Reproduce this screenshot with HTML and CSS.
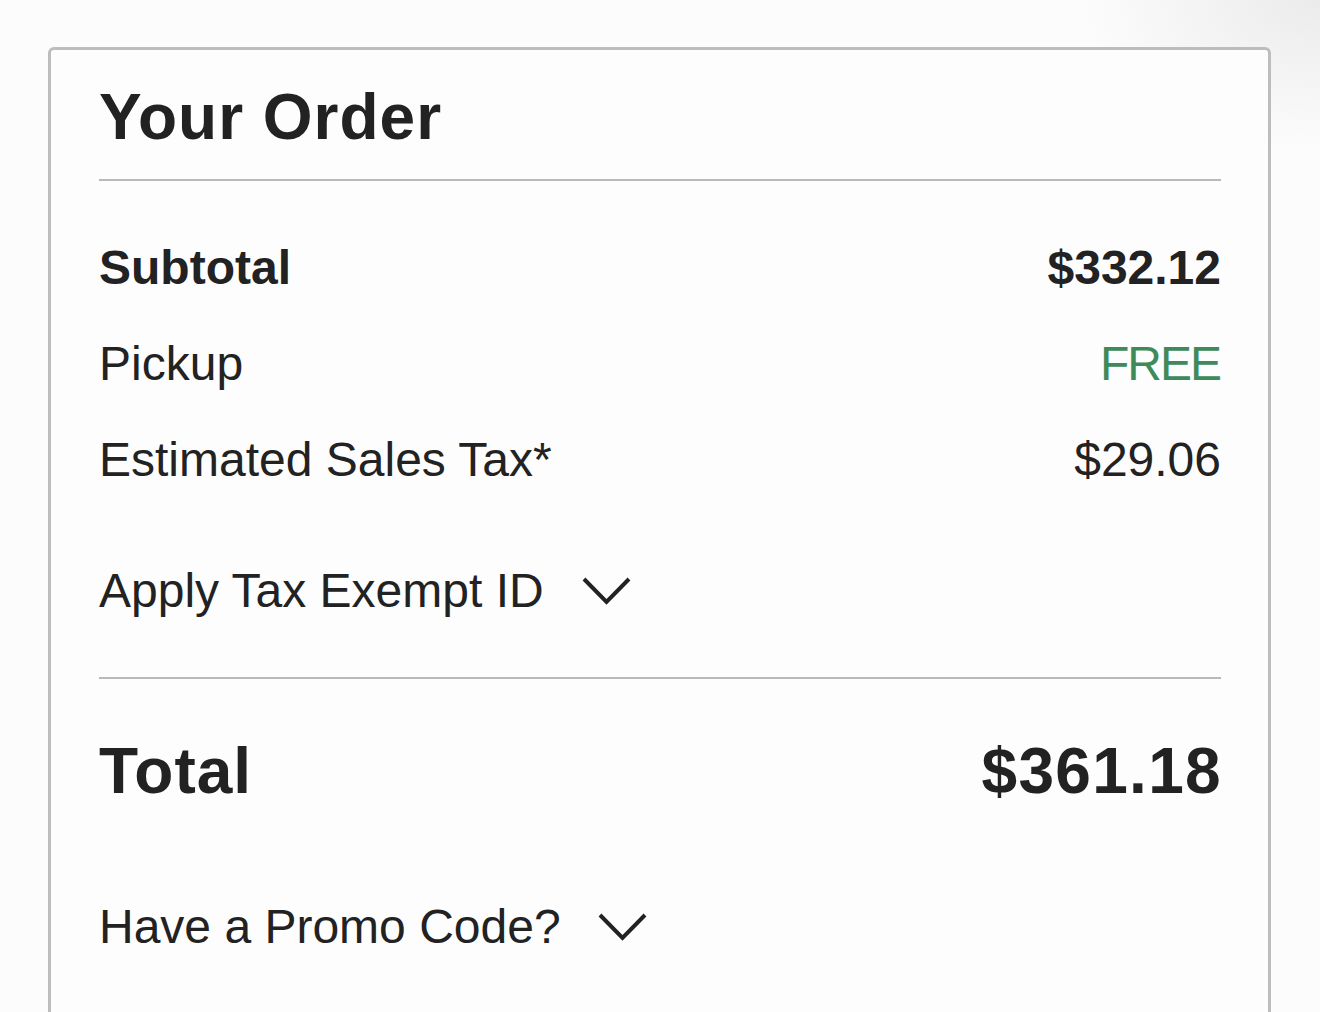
FILE: index.html
```html
<!DOCTYPE html>
<html lang="en">
<head>
<meta charset="utf-8">
<title>Your Order</title>
<link rel="stylesheet" href="styles.css">
</head>
<body>
<section class="card">
  <h1 class="title">Your Order</h1>
  <hr class="divider">
  <div class="lines">
    <div class="row strong"><span>Subtotal</span><span>$332.12</span></div>
    <div class="row"><span>Pickup</span><span class="free">FREE</span></div>
    <div class="row"><span>Estimated Sales Tax*</span><span>$29.06</span></div>
  </div>
  <button class="toggle tax" type="button">
    <span>Apply Tax Exempt ID</span>
    <svg class="chev" width="50" height="30" viewBox="0 0 50 30" aria-hidden="true"><polyline points="2,3 24.5,26 47,3" fill="none" stroke="#222222" stroke-width="4" stroke-linejoin="miter"/></svg>
  </button>
  <hr class="divider">
  <div class="row total"><span>Total</span><span>$361.18</span></div>
  <button class="toggle promo" type="button">
    <span>Have a Promo Code?</span>
    <svg class="chev" width="50" height="30" viewBox="0 0 50 30" aria-hidden="true"><polyline points="2,3 24.5,26 47,3" fill="none" stroke="#222222" stroke-width="4" stroke-linejoin="miter"/></svg>
  </button>
</section>
</body>
</html>
```

FILE: styles.css
```css
html, body {
  margin: 0;
  padding: 0;
}
body {
  background-color: #fcfcfc;
  background-image: radial-gradient(ellipse 240px 150px at 1320px 0px, #ebebeb, rgba(252,252,252,0));
  background-repeat: no-repeat;
  font-family: "Liberation Sans", Arial, Helvetica, sans-serif;
  color: #222222;
  height: 1012px;
  overflow: hidden;
}
.card {
  margin: 47px 0 0 48px;
  width: 1223px;
  box-sizing: border-box;
  border: 3px solid #bdbdbd;
  border-radius: 6px;
  background: #fdfdfd;
  padding: 35px 47px 120px 48px;
}
.title {
  margin: 0;
  font-size: 64px;
  line-height: 64px;
  font-weight: 700;
  letter-spacing: 1px;
}
.divider {
  margin: 30px 0 0 0;
  border: 0;
  height: 2px;
  background: #b9b9b9;
}
.lines {
  margin-top: 63px;
  display: flex;
  flex-direction: column;
  gap: 48px;
}
.row {
  display: flex;
  justify-content: space-between;
  align-items: center;
  font-size: 48px;
  line-height: 48px;
}
.row.strong {
  font-weight: 700;
}
.free {
  color: #3e8a5b;
  letter-spacing: -2px;
  margin-right: 1px;
}
.toggle {
  display: flex;
  align-items: center;
  padding: 0;
  border: 0;
  background: none;
  font: inherit;
  color: inherit;
  font-size: 48px;
  line-height: 48px;
  cursor: pointer;
}
.toggle.tax {
  margin-top: 83px;
}
.toggle.tax + .divider {
  margin-top: 62px;
}
.toggle.tax .chev {
  margin-left: 38px;
}
.toggle.promo {
  margin-top: 100px;
}
.toggle.promo .chev {
  margin-left: 37px;
}
.chev {
  display: block;
}
.row.total {
  margin-top: 60px;
  font-size: 64px;
  line-height: 64px;
  font-weight: 700;
  letter-spacing: 1px;
}
.row.total span:last-child {
  letter-spacing: 1.3px;
  margin-right: -1px;
}
```
